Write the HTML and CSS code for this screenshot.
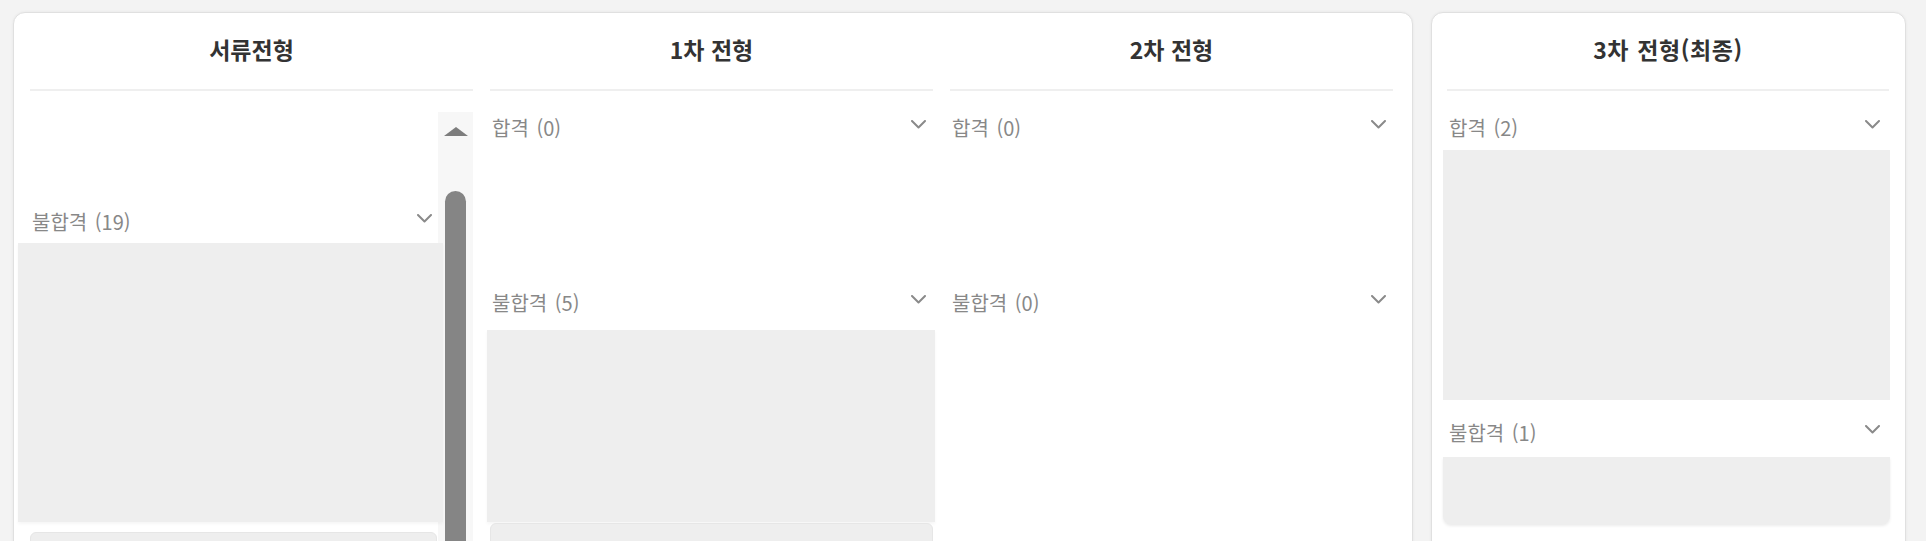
FILE: index.html
```html
<!DOCTYPE html>
<html lang="ko">
<head>
<meta charset="utf-8">
<title>전형 현황</title>
<link rel="stylesheet" href="styles.css">
</head>
<body>
<div class="board">
  <section class="card card-main">
    <div class="col">
      <div class="col-head"><h2 class="col-title">서류전형</h2></div>
      <div class="col-body scroll">
        <div class="scroll-content">
          <div class="scroll-gap"></div>
          <div class="sec-head sec-head-first">
            <span class="sec-label">불합격 (19)</span>
            <svg class="chev" viewBox="0 0 15 9"><polyline points="1,1 7.5,7.5 14,1"/></svg>
          </div>
          <div class="item item-c1a"></div>
          <div class="item item-c1b"></div>
        </div>
        <div class="scrollbar">
          <span class="scroll-up"></span>
          <span class="thumb"></span>
        </div>
      </div>
    </div>

    <div class="col">
      <div class="col-head"><h2 class="col-title">1차 전형</h2></div>
      <div class="col-body">
        <div class="sec-head">
          <span class="sec-label">합격 (0)</span>
          <svg class="chev" viewBox="0 0 15 9"><polyline points="1,1 7.5,7.5 14,1"/></svg>
        </div>
        <div class="sec-empty"></div>
        <div class="sec-head">
          <span class="sec-label">불합격 (5)</span>
          <svg class="chev" viewBox="0 0 15 9"><polyline points="1,1 7.5,7.5 14,1"/></svg>
        </div>
        <div class="item item-c2a"></div>
        <div class="item item-c2b"></div>
      </div>
    </div>

    <div class="col">
      <div class="col-head"><h2 class="col-title">2차 전형</h2></div>
      <div class="col-body">
        <div class="sec-head">
          <span class="sec-label">합격 (0)</span>
          <svg class="chev" viewBox="0 0 15 9"><polyline points="1,1 7.5,7.5 14,1"/></svg>
        </div>
        <div class="sec-empty"></div>
        <div class="sec-head">
          <span class="sec-label">불합격 (0)</span>
          <svg class="chev" viewBox="0 0 15 9"><polyline points="1,1 7.5,7.5 14,1"/></svg>
        </div>
      </div>
    </div>
  </section>

  <section class="card card-final">
    <div class="col">
      <div class="col-head"><h2 class="col-title col-title-wide">3차 전형(최종)</h2></div>
      <div class="col-body">
        <div class="sec-head sec-head-final">
          <span class="sec-label">합격 (2)</span>
          <svg class="chev" viewBox="0 0 15 9"><polyline points="1,1 7.5,7.5 14,1"/></svg>
        </div>
        <div class="item item-f1"></div>
        <div class="sec-head sec-head-final sec-head-gap">
          <span class="sec-label">불합격 (1)</span>
          <svg class="chev" viewBox="0 0 15 9"><polyline points="1,1 7.5,7.5 14,1"/></svg>
        </div>
        <div class="item item-f2"></div>
      </div>
    </div>
  </section>
</div>
</body>
</html>
```

FILE: styles.css
```css
* { box-sizing: border-box; }

html, body {
  margin: 0;
  height: 541px;
  overflow: hidden;
  background: #f3f3f3;
  font-family: "Noto Sans CJK KR", "Noto Sans", sans-serif;
}

.board {
  display: flex;
  align-items: flex-start;
  gap: 18px;
  padding: 12px 0 0 13px;
}

.card {
  background: #fff;
  border: 1px solid #e0e0e0;
  border-radius: 12px;
  box-shadow: 0 0 3px rgba(0, 0, 0, 0.06);
  height: 600px;
}

.card-main {
  width: 1400px;
  padding: 0 19px 0 16px;
  display: grid;
  grid-template-columns: repeat(3, 443px);
  column-gap: 17px;
}

.card-final {
  width: 475px;
  padding: 0 16px 0 15px;
  display: flex;
}

.col {
  display: flex;
  flex-direction: column;
  min-width: 0;
  flex: 1;
}

.col-head {
  padding: 21px 0 25px;
  border-bottom: 2px solid #efefef;
}

.col-title {
  margin: 0;
  font-size: 23px;
  line-height: 30px;
  font-weight: 700;
  color: #333;
  text-align: center;
}

.col-title-wide { letter-spacing: 0.6px; word-spacing: 1px; }

.col-body {
  padding-top: 15px;
  flex: 1;
}

.sec-head {
  height: 46px;
  padding: 0 7px 2px 2px;
  display: flex;
  align-items: center;
  justify-content: space-between;
}

.sec-head-final { padding-right: 9px; }

.sec-head-gap { margin-top: 11px; }

.sec-label {
  font-size: 20px;
  line-height: 24px;
  word-spacing: 2px;
  color: #888;
}

.chev {
  width: 15px;
  height: 9px;
  align-self: flex-start;
  margin-top: 14px;
  fill: none;
  stroke: #8a8a8a;
  stroke-width: 2;
  stroke-linecap: round;
  stroke-linejoin: round;
}

.sec-empty { height: 129px; }

.item {
  background: #eeeeee;
}

/* first column: scrolled list with scrollbar */
.col-body.scroll {
  padding-top: 21px;
  margin-left: -12px;
  display: flex;
}

.scroll-content {
  flex: 1;
  min-width: 0;
}

.scroll-gap { height: 88px; }

.sec-head-first { padding: 0 6px 2px 14px; }

.scrollbar {
  width: 35px;
  background: #f7f7f7;
  display: flex;
  flex-direction: column;
  align-items: center;
}

.scroll-up {
  width: 0;
  height: 0;
  border-left: 12px solid transparent;
  border-right: 12px solid transparent;
  border-bottom: 9px solid #7d7d7d;
  margin-top: 15px;
}

.thumb {
  width: 21px;
  margin-top: 55px;
  flex: 1;
  background: #858585;
  border-radius: 11px 11px 0 0;
}

.item-c1a {
  height: 279px;
  margin: -3px -5px 0 0;
  position: relative;
  z-index: 1;
  box-shadow: 0 2px 3px rgba(0, 0, 0, 0.04);
}

.item-c1b {
  height: 80px;
  margin: 10px 1px 0 12px;
  border: 1px solid #e6e6e6;
  border-radius: 6px;
}

/* second column */
.item-c2a {
  height: 192px;
  margin: 3px -2px 0 -3px;
  box-shadow: 0 2px 3px rgba(0, 0, 0, 0.04);
}

.item-c2b {
  height: 60px;
  margin-top: 1px;
  border: 1px solid #e6e6e6;
  border-radius: 6px;
}

/* final card */
.item-f1 {
  height: 250px;
  margin: -2px -1px 0 -4px;
}

.item-f2 {
  height: 67px;
  margin: 0 -1px 0 -4px;
  border-radius: 0 0 8px 8px;
  box-shadow: 0 2px 3px rgba(0, 0, 0, 0.08);
}
```
